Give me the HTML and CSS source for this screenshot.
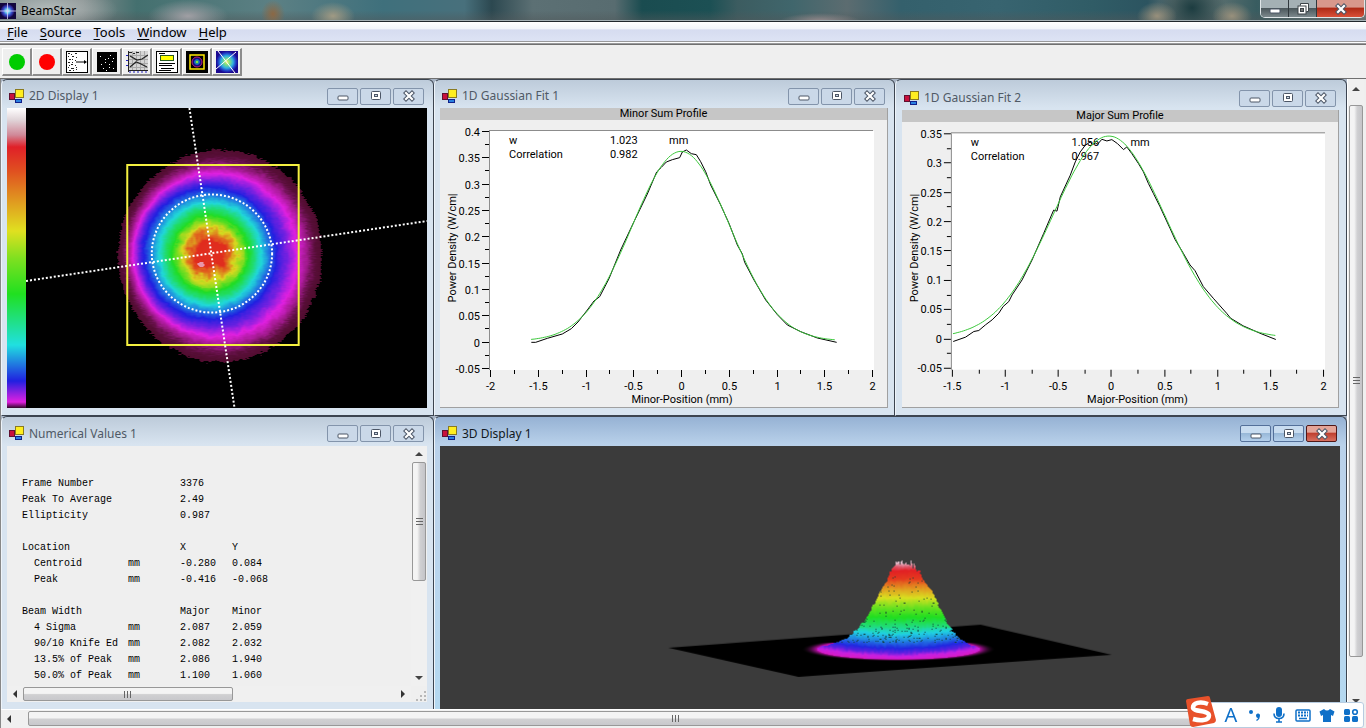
FILE: index.html
```html
<!DOCTYPE html>
<html lang="en">
<head>
<meta charset="utf-8">
<title>BeamStar</title>
<link rel="stylesheet" href="styles.css">
</head>
<body>
<svg class="defs" aria-hidden="true">
  <symbol id="i-form" viewBox="0 0 15 15">
    <rect x=".5" y="4.500" width="5" height="6" fill="#c8103c" stroke="#601030"/>
    <rect x="6.500" y=".5" width="8" height="8" fill="#ffee20" stroke="#8a7a20"/>
    <rect x="6.500" y="10.500" width="6" height="3" fill="#2a80e0" stroke="#10208a"/>
  </symbol>
  <symbol id="i-min" viewBox="0 0 14 12"><rect x="2" y="6" width="10" height="4" rx="1" fill="#fff" stroke="#4c5666"/></symbol>
  <symbol id="i-max" viewBox="0 0 14 12"><rect x="2.500" y="1.500" width="9" height="8" rx="1" fill="#fff" stroke="#4c5666"/><rect x="5.500" y="4.500" width="3" height="2" fill="#cdd8e6" stroke="#4c5666"/></symbol>
  <symbol id="i-close" viewBox="0 0 14 12"><path d="M4 3l6 6M10 3l-6 6" stroke="#4c5666" stroke-width="4.200" stroke-linecap="square"/><path d="M4 3l6 6M10 3l-6 6" stroke="#fff" stroke-width="2.200" stroke-linecap="square"/></symbol>
  <symbol id="i-restore" viewBox="0 0 14 14"><path d="M4.500 3.500v-2h8v8h-2" fill="#fff" stroke="#3c4448"/><rect x="2" y="4" width="8" height="8" fill="#fff" stroke="#3c4448"/><rect x="4.500" y="6.500" width="3" height="3" fill="#777" stroke="#3c4448"/></symbol>
  <symbol id="i-up" viewBox="0 0 8 8"><path d="M0 6l4-4 4 4z" fill="#444"/></symbol>
  <symbol id="i-down" viewBox="0 0 8 8"><path d="M0 2l4 4 4-4z" fill="#444"/></symbol>
  <symbol id="i-left" viewBox="0 0 8 8"><path d="M6 0L2 4l4 4z" fill="#333"/></symbol>
  <symbol id="i-right" viewBox="0 0 8 8"><path d="M2 0l4 4-4 4z" fill="#333"/></symbol>
</svg>

<header class="titlebar">
  <svg class="titlebar__icon" viewBox="0 0 16 16" aria-hidden="true">
    <defs><radialGradient id="beam"><stop offset="0" stop-color="#e8f8ff"/><stop offset=".3" stop-color="#6ad0e8"/><stop offset=".6" stop-color="#3a50d0"/><stop offset="1" stop-color="#1a0858"/></radialGradient></defs>
    <rect width="16" height="16" fill="#12063c"/><circle cx="7.500" cy="8" r="7" fill="url(#beam)"/><path d="M7.500 0v16M0 8h16" stroke="#d8d0f8" stroke-width=".8"/>
  </svg>
  <h1 class="titlebar__name">BeamStar</h1>
  <div class="caption">
    <button class="caption__btn" aria-label="Minimize"><svg viewBox="0 0 14 12"><use href="#i-min"/></svg></button>
    <button class="caption__btn" aria-label="Restore"><svg viewBox="0 0 14 14"><use href="#i-restore"/></svg></button>
    <button class="caption__btn caption__btn--close" aria-label="Close"><svg viewBox="0 0 14 12"><use href="#i-close"/></svg></button>
  </div>
</header>

<nav class="menu" aria-label="Main menu">
  <button class="menu__item"><u>F</u>ile</button>
  <button class="menu__item"><u>S</u>ource</button>
  <button class="menu__item"><u>T</u>ools</button>
  <button class="menu__item"><u>W</u>indow</button>
  <button class="menu__item"><u>H</u>elp</button>
</nav>

<div class="toolbar" role="toolbar" aria-label="Tools">
  <button class="tool" aria-label="Start"><svg viewBox="0 0 22 22"><circle cx="11" cy="11" r="8" fill="#0c0"/></svg></button>
  <button class="tool" aria-label="Stop"><svg viewBox="0 0 22 22"><circle cx="11" cy="11" r="8" fill="#f00"/></svg></button>
  <button class="tool" aria-label="Average"><svg viewBox="0 0 22 22"><rect x=".5" y=".5" width="21" height="21" fill="#fff" stroke="#000"/><path d="M10 11h9" stroke="#000"/><path d="M18 9l3 2-3 2z"/><path d="M2 2.500h2m1 1h1m3-1h2M2 5.500h1m3 0h2m2 1h1M3 8.500h2m1 0h1m2 1h1M2 11.500h2m2 0h1M3 14.500h1m1-1h2m2 1h1M2 16.500h1m2 1h3m2-1h1M3 19.500h2m2 0h1m2-1h1" stroke="#222"/></svg></button>
  <button class="tool" aria-label="Background"><svg viewBox="0 0 22 22"><rect x="1" y="1" width="20" height="20"/><path d="M4 5.500h1m4 3h1m4-4h1m2 3h1M5 13.500h1m3-2h1m3 2h1m2-3h1M7 17.500h1m5-1h1m3 1h1M12 7.500h1m-3 12h1" stroke="#fff"/></svg></button>
  <button class="tool" aria-label="Profiles"><svg viewBox="0 0 22 22"><rect x="2" y="0" width="20" height="19" fill="#d4d4d4"/><path d="M6.500 0v19M10.500 0v19M14.500 0v19M18.500 0v19M2 4.500h20M2 8.500h20M2 12.500h20M2 16.500h20" stroke="#a8a8a8"/><path d="M4 5l7 4 5-1 6-4M4 16l6-5 3 1 8 4" fill="none" stroke="#222" stroke-width="1.200"/><path d="M3 1.500h3m1 1h2m1-1h3M2 19.500h20M2.500 0v21" stroke="#222"/><path d="M4 20v2M8 20v2M12 20v2M16 20v2M20 20v2M0 4.500h2m-2 5h2m-2 5h2" stroke="#2020c0"/></svg></button>
  <button class="tool" aria-label="Numerical values"><svg viewBox="0 0 22 22"><rect x=".5" y=".5" width="21" height="21" fill="#fff" stroke="#000"/><path d="M3 2.500h6M3 12.500h16M3 14.500h13M5 17.500h13M3 19.500h12" stroke="#000"/><rect x="4.500" y="4.500" width="13" height="5" fill="#ff0" stroke="#285a20"/></svg></button>
  <button class="tool" aria-label="2D display"><svg viewBox="0 0 22 22"><rect width="22" height="22"/><rect x="4" y="4" width="14" height="14" fill="none" stroke="#ffe800" stroke-width="1.500"/><circle cx="11" cy="11" r="5" fill="#101070" stroke="#c01880"/><circle cx="11" cy="11" r="2.500" fill="#18a080" stroke="#2050e0"/><circle cx="11" cy="11" r="1" fill="#a0f040"/></svg></button>
  <button class="tool" aria-label="Beam axes"><svg viewBox="0 0 22 22"><defs><radialGradient id="axes"><stop offset="0" stop-color="#f8f060"/><stop offset=".25" stop-color="#80e080"/><stop offset=".55" stop-color="#30b0e0"/><stop offset=".8" stop-color="#2040c8"/><stop offset="1" stop-color="#1a0890"/></radialGradient></defs><rect width="22" height="22" fill="#1a0890"/><circle cx="11" cy="11" r="11" fill="url(#axes)"/><path d="M2 0l17 22M20 1L0 18" stroke="#fff"/></svg></button>
</div>

<main class="mdi">
  <div class="mdi__windows">
    <section class="window window--map">
      <div class="window__title"><svg class="window__icon" aria-hidden="true"><use href="#i-form"/></svg><h2>2D Display 1</h2><div class="window__buttons"></div></div>
      <div class="window__body map">
        <div class="map__scale"></div>
        <div class="map__view">
          <canvas id="beam2d" class="map__canvas" width="400" height="300"></canvas>
          <svg class="map__overlay" viewBox="0 0 400 300" preserveAspectRatio="none">
            <rect x="101" y="57" width="171" height="180" fill="none" stroke="#f4f040" stroke-width="2"/>
            <g fill="none" stroke="#fff" stroke-width="2" stroke-dasharray="2 2"><path d="M163 0L208 300M0 173L400 113"/><ellipse cx="185.500" cy="145.500" rx="60" ry="59"/></g>
          </svg>
        </div>
      </div>
    </section>

    <section class="window">
      <div class="window__title"><svg class="window__icon" aria-hidden="true"><use href="#i-form"/></svg><h2>1D Gaussian Fit 1</h2><div class="window__buttons"></div></div>
      <div class="window__body plot">
        <h3 class="plot__title">Minor Sum Profile</h3>
        <svg class="plot__chart" id="fit1" viewBox="0 0 447 287">
          <rect x="50" y="11" width="384" height="239" fill="#fff"/>
          <path d="M49.500 250V11M49 10.500h384" stroke="#8c8c8c" fill="none"/>
          <g class="ticks"></g>
          <text x="242" y="283" text-anchor="middle">Minor-Position (mm)</text>
          <text transform="translate(16 128) rotate(-90)" text-anchor="middle">Power Density (W/cm|</text>
          <text x="69" y="24">w</text><text x="170" y="24">1.023</text><text x="229" y="24">mm</text>
          <text x="69" y="38">Correlation</text><text x="170" y="38">0.982</text>
          <polyline class="trace" transform="translate(-6 -40) scale(.33333)" points="292,787 305,787 340,775 385,762 412,746 432,726 460,690 480,663 497,650 525,596 560,510 600,425 640,342 668,276 682,262 697,246 715,239 737,233 745,216 757,210 772,221 787,224 800,245 815,275 830,315 860,375 885,430 910,495 925,522 932,547 960,600 995,660 1030,704 1060,735 1100,755 1150,774 1208,787"/>
          <path class="fit"/>
        </svg>
      </div>
    </section>

    <section class="window window--fit2">
      <div class="window__title"><svg class="window__icon" aria-hidden="true"><use href="#i-form"/></svg><h2>1D Gaussian Fit 2</h2><div class="window__buttons"></div></div>
      <div class="window__body plot">
        <h3 class="plot__title">Major Sum Profile</h3>
        <svg class="plot__chart" id="fit2" viewBox="0 0 437 285">
          <rect x="50" y="11" width="374" height="237" fill="#fff"/>
          <path d="M49.500 248V11M49 10.500h375" stroke="#8c8c8c" fill="none"/>
          <g class="ticks"></g>
          <text x="236" y="281" text-anchor="middle">Major-Position (mm)</text>
          <text transform="translate(16 126) rotate(-90)" text-anchor="middle">Power Density (W/cm|</text>
          <text x="69" y="24">w</text><text x="170" y="24">1.056</text><text x="229" y="24">mm</text>
          <text x="69" y="38">Correlation</text><text x="170" y="38">0.967</text>
          <polyline class="trace" transform="translate(-8 -42) scale(.33333)" points="178,785 215,772 240,755 255,752 275,735 295,720 315,700 328,680 345,665 355,645 385,600 415,540 450,460 480,390 490,393 500,350 530,285 545,245 560,215 575,195 590,185 597,193 605,188 612,192 625,177 640,182 655,178 672,190 690,208 700,200 715,220 735,250 750,275 765,310 780,340 800,380 830,445 845,478 870,520 890,555 905,572 930,620 960,655 1000,700 1012,715 1050,738 1100,760 1148,779"/>
          <path class="fit"/>
        </svg>
      </div>
    </section>

    <section class="window window--values">
      <div class="window__title"><svg class="window__icon" aria-hidden="true"><use href="#i-form"/></svg><h2>Numerical Values 1</h2><div class="window__buttons"></div></div>
      <div class="window__body values">
        <div class="values__view">
          <table class="values__table">
            <tbody>
              <tr><td>Frame Number</td><td></td><td>3376</td><td></td></tr>
              <tr><td>Peak To Average</td><td></td><td>2.49</td><td></td></tr>
              <tr><td>Ellipticity</td><td></td><td>0.987</td><td></td></tr>
            </tbody>
            <tbody>
              <tr><th>Location</th><th></th><th>X</th><th>Y</th></tr>
              <tr class="sub"><td>Centroid</td><td>mm</td><td>-0.280</td><td>0.084</td></tr>
              <tr class="sub"><td>Peak</td><td>mm</td><td>-0.416</td><td>-0.068</td></tr>
            </tbody>
            <tbody>
              <tr><th>Beam Width</th><th></th><th>Major</th><th>Minor</th></tr>
              <tr class="sub"><td>4 Sigma</td><td>mm</td><td>2.087</td><td>2.059</td></tr>
              <tr class="sub"><td>90/10 Knife Ed</td><td>mm</td><td>2.082</td><td>2.032</td></tr>
              <tr class="sub"><td>13.5% of Peak</td><td>mm</td><td>2.086</td><td>1.940</td></tr>
              <tr class="sub"><td>50.0% of Peak</td><td>mm</td><td>1.100</td><td>1.060</td></tr>
            </tbody>
          </table>
        </div>
        <div class="scroll scroll--v">
          <button class="scroll__arrow" aria-label="Scroll up"><svg><use href="#i-up"/></svg></button>
          <div class="scroll__track"><div class="scroll__thumb" style="flex-grow:117"><i></i></div><div style="flex-grow:89"></div></div>
          <button class="scroll__arrow" aria-label="Scroll down"><svg><use href="#i-down"/></svg></button>
        </div>
        <div class="scroll scroll--h">
          <button class="scroll__arrow" aria-label="Scroll left"><svg><use href="#i-left"/></svg></button>
          <div class="scroll__track"><div class="scroll__thumb" style="flex-grow:209"><i></i></div><div style="flex-grow:162"></div></div>
          <button class="scroll__arrow" aria-label="Scroll right"><svg><use href="#i-right"/></svg></button>
        </div>
        <svg class="values__grip" viewBox="0 0 12 12" aria-hidden="true"><path d="M9 2h2M5 6h2m2 0h2M1 10h2m2 0h2m2 0h2" stroke="#b8b8b8" stroke-width="2"/></svg>
      </div>
    </section>

    <section class="window window--active">
      <div class="window__title"><svg class="window__icon" aria-hidden="true"><use href="#i-form"/></svg><h2>3D Display 1</h2><div class="window__buttons"></div></div>
      <div class="window__body surface"><canvas id="beam3d" class="surface__canvas" width="899" height="262"></canvas></div>
    </section>
  </div>

  <div class="scroll scroll--v">
    <button class="scroll__arrow" aria-label="Scroll up"><svg><use href="#i-up"/></svg></button>
    <div class="scroll__track"><div style="flex-grow:8"></div><div class="scroll__thumb" style="flex-grow:551"><i></i></div><div style="flex-grow:36"></div></div>
    <button class="scroll__arrow" aria-label="Scroll down"><svg><use href="#i-down"/></svg></button>
  </div>
  <div class="scroll scroll--h">
    <button class="scroll__arrow" aria-label="Scroll left"><svg><use href="#i-left"/></svg></button>
    <div class="scroll__track"><div style="flex-grow:11"></div><div class="scroll__thumb" style="flex-grow:1294"><i></i></div><div style="flex-grow:7"></div></div>
    <button class="scroll__arrow" aria-label="Scroll right"><svg><use href="#i-right"/></svg></button>
  </div>
</main>

<aside class="ime" aria-label="Input method">
  <svg class="ime__logo" viewBox="0 0 32 32" aria-hidden="true"><path d="M1 5Q1 3 3 3L23 0Q25 0 25 2L31 24Q31 26 29 27L8 31Q6 31 5 29Z" fill="#e8512a"/><path d="M23 8C15 5 8 7 8 11.500S24 14 24 19.500 15 25 8 23" fill="none" stroke="#fff" stroke-width="4.500"/></svg>
  <button class="ime__mode">A</button>
  <button aria-label="Punctuation"><svg viewBox="0 0 16 16"><circle cx="4" cy="5" r="2"/><path d="M9 8a2 2 0 1 1 4 1q0 3-3 5l-1-1q2-1 2-2-2 0-2-3z"/></svg></button>
  <button aria-label="Voice"><svg viewBox="0 0 16 16"><rect x="5" y="0" width="6" height="10" rx="3"/><path d="M3 6.500q0 5 5 5t5-5M8 11v4M5 15h6" fill="none" stroke="#0f70c8" stroke-width="1.600"/></svg></button>
  <button aria-label="Keyboard"><svg viewBox="0 0 16 16"><rect x="1" y="3" width="14" height="11" rx="1" fill="#fff" stroke="#0f70c8" stroke-width="1.500"/><path d="M3 5.500h10M3 8.500h10" stroke="#0f70c8" stroke-width="1.800" stroke-dasharray="2 1"/><path d="M4 11.500h8" stroke="#0f70c8" stroke-width="1.500"/></svg></button>
  <button aria-label="Skin"><svg viewBox="0 0 16 16"><path d="M5 2q3 3 6 0l4.500 2.500L14 9l-2-1v7H4V8L2 9 .5 4.500z"/></svg></button>
  <button aria-label="Toolbox"><svg viewBox="0 0 16 16"><rect x="1" y="2" width="6" height="6" rx="1.500"/><circle cx="12" cy="5" r="2.300" fill="none" stroke="#0f70c8" stroke-width="1.600"/><rect x="1" y="9" width="6" height="6" rx="1.500"/><rect x="9" y="9" width="6" height="6" rx="1.500"/></svg></button>
</aside>
<script src="app.js"></script>
</body>
</html>
```

FILE: styles.css
```css
* { box-sizing: border-box; }
body {
  margin: 0;
  height: 100vh;
  display: flex;
  flex-direction: column;
  overflow: hidden;
  background: #efefef;
  color: #000;
  font: 12px/16px "Noto Sans", "Open Sans", sans-serif;
}
h1, h2, h3 { margin: 0; font-size: inherit; font-weight: 400; }
button { padding: 0; border: 0; background: none; font: inherit; color: inherit; display: flex; align-items: center; justify-content: center; }
.defs { display: none; }

/* application title bar */
.titlebar {
  flex: none;
  height: 22px;
  display: flex;
  align-items: center;
  gap: 5px;
  border-bottom: 1px solid #20282c;
  box-shadow: inset 0 -1px #a4b0b4;
  background:
    radial-gradient(ellipse 70px 24px at 48px 10px, #b4bcbc, transparent),
    radial-gradient(ellipse 40px 16px at 188px 16px, #a09fa4, transparent),
    radial-gradient(ellipse 12px 14px at 273px 14px, #8c6844, transparent),
    radial-gradient(ellipse 22px 14px at 333px 16px, #a09a84, transparent),
    radial-gradient(ellipse 40px 8px at 820px 21px, #948a8c, transparent),
    radial-gradient(ellipse 20px 14px at 1157px 16px, #98907c, transparent),
    radial-gradient(ellipse 20px 14px at 1232px 16px, #98907c, transparent),
    radial-gradient(ellipse 34px 30px at 1192px 8px, #1c3c40, transparent),
    linear-gradient(transparent 50%, #50585a88),
    linear-gradient(90deg, #7c8c8c 0, #848c8c 6%, #44706f 10%, #5c8084 20%, #3f707c 28%, #48707c 34%, #2c4850 36%, #5c7074 39%, #586c70 45%, #1a4c50 47%, #1c5054 52%, #3c5c60 54%, #40666c 58%, #5c6c70 62%, #34606c 66%, #386470 73%, #305c66 80%, #2c5460 84%, #647474 86%, #5c7070 89%, #385c60 92%, #7c8484 100%);
}
.titlebar__icon { width: 16px; height: 16px; }
.titlebar__name { flex: 1; }
.caption { display: flex; align-self: flex-start; height: 18px; margin-right: 1px; border: 1px solid #e0e6e8; border-top: 0; border-radius: 0 0 5px 5px; overflow: hidden; }
.caption__btn { width: 28px; border-right: 1px solid #30383c; background: linear-gradient(#a4b0b4 0 45%, #4c585c 50%, #7c888c); }
.caption__btn svg { width: 14px; height: 14px; }
.caption__btn--close { width: 47px; border-right: 0; background: linear-gradient(#d8988c 0 40%, #b02c18 50%, #d85038); }

/* menu */
.menu { flex: none; height: 22px; padding: 0 1px; display: flex; border-bottom: 3px double #9a9a9c; background: linear-gradient(#fff 0, #f2f5fa 35%, #d6dcf0 42%, #dde3f4); }
.menu__item { display: block; padding: 0 6px; font-size: 13px; line-height: 18px; }
.menu__item u { text-underline-offset: 2px; }

/* toolbar */
.toolbar { flex: none; height: 35px; display: flex; padding: 3px 2px 0; border-top: 1px solid #707070; border-bottom: 1px solid #707070; }
.tool { width: 30px; height: 28px; border-right: 2px solid #8c8c8c; border-bottom: 2px solid #8c8c8c; border-left: 1px solid #fff; border-top: 1px solid #fff; }
.tool svg { width: 22px; height: 22px; }

/* workspace */
.mdi { flex: 1; min-height: 0; display: grid; grid-template: minmax(0, 1fr) 19px / minmax(0, 1fr) 17px; padding: 0 2px 0 0; border-left: 1px solid #888; }
.mdi__windows { display: grid; min-height: 0; grid-template-rows: minmax(0, 337fr) minmax(0, 293fr); grid-template-columns: minmax(0, 433fr) minmax(0, 461fr) minmax(0, 452fr); background: #a8b4c4; }
.window {
  min-width: 0;
  min-height: 0;
  display: flex;
  flex-direction: column;
  padding: 0 6px 7px 5px;
  border: 1px solid #3c4450;
  border-left-color: #eef4fa;
  border-radius: 6px 6px 0 0;
  background: linear-gradient(#bdcbda, #d8e4f0 28px);
}
.window--fit2 { padding: 2px 7px 7px 6px; }
.window--values { border-bottom: 0; }
.window--active { grid-column: span 2; padding-bottom: 0; border-bottom: 0; background: linear-gradient(#96b2d4, #b9d1ea 28px, #bcd4ec 100px, #b4d8f0); }
.window__title { flex: none; height: 28px; display: flex; align-items: center; gap: 5px; padding: 4px 3px 0 2px; color: #505a66; }
.window__title h2 { flex: 1; white-space: nowrap; }
.window--active .window__title { color: #101820; }
.window--active .window__title, .window--values .window__title { height: 29px; }
.window__icon { width: 15px; height: 15px; }
.window__buttons { display: flex; gap: 2px; }
.window__btn { width: 31px; height: 17px; border: 1px solid #8394ab; border-radius: 2px; background: #cad8e8; }
.window__btn svg { width: 14px; height: 12px; }
.window--active .window__btn { border-color: #54709a; background: linear-gradient(#c8dcf0 45%, #98b8d8 50%, #b4d0ec); }
.window--active .window__btn:last-child { border-color: #501818; background: linear-gradient(#e4a498 40%, #c04030 50%, #d87060); }
.window__body { flex: 1; min-height: 0; }

.map { display: flex; background: #000; }
.map__scale { width: 19px; background: linear-gradient(#fff 0, #e0d4d8 4%, #d08898 9%, #e02028 13%, #e05020 21%, #e0a020 32%, #e0e020 41%, #80e020 50%, #20e020 62%, #20e090 72%, #20e0e0 79%, #2080e0 85%, #2020e0 91%, #9020e0 95%, #e020e0 98%, #300828 100%); }
.map__view { flex: 1; min-width: 0; position: relative; }
.map__canvas { display: block; width: 100%; height: 100%; }
.map__overlay { position: absolute; inset: 0; width: 100%; height: 100%; }

.plot { display: flex; flex-direction: column; background: #efefef; border-right: 1px solid #a0a0a0; border-bottom: 1px solid #a0a0a0; font: 11px/12px Roboto, "Liberation Sans", sans-serif; }
.plot__title { flex: none; height: 12px; background: #c6c6c6; text-align: center; }
.plot__chart { flex: 1; min-height: 0; width: 100%; }
.trace { fill: none; stroke: #000; stroke-width: 1px; vector-effect: non-scaling-stroke; }
.fit { fill: none; stroke: #3cc83c; stroke-width: 1px; }
.tick { fill: none; stroke: #000; }

.values { display: grid; grid-template: minmax(0, 1fr) 16px / minmax(0, 1fr) 16px; background: #efefef; }
.values__view { overflow: hidden; padding: 30px 0 0 15px; }
.values__table { table-layout: fixed; width: 270px; border-collapse: collapse; font: 10px/16px "Liberation Mono", monospace; text-align: left; white-space: pre; }
.values__table td, .values__table th { height: 16px; padding: 0; font-weight: 400; }
.values__table tr > :nth-child(1) { width: 106px; }
.values__table tr > :nth-child(2), .values__table tr > :nth-child(3) { width: 52px; }
.values__table .sub > :first-child { padding-left: 12px; }
.values__table tbody + tbody::before { content: ""; display: table-row; height: 16px; }
.values__grip { width: 12px; height: 12px; place-self: end; }

.surface { background: #3b3b3b; }
.surface__canvas { display: block; width: 100%; height: 100%; object-fit: contain; }

/* scroll bars */
.scroll { display: flex; min-width: 0; min-height: 0; background: #f0f0f0; }
.scroll--v { flex-direction: column; padding: 0 1px; }
.scroll--h { padding: 1px 0; }
.scroll__arrow { flex: none; width: 16px; height: 16px; align-self: center; }
.scroll__arrow svg { width: 8px; height: 8px; }
.scroll__track { flex: 1; min-width: 0; min-height: 0; display: flex; }
.scroll--v .scroll__track { flex-direction: column; }
.scroll__track > div { flex-basis: 0; }
.scroll__thumb { display: flex; align-items: center; justify-content: center; border: 1px solid #989898; border-radius: 2px; background: linear-gradient(#f4f4f4 45%, #d0d0d2 55%, #c8c8cc); }
.scroll--v .scroll__thumb { background: linear-gradient(90deg, #f4f4f4 35%, #d0d0d2 60%, #c4c4c8); }
.scroll__thumb i { width: 8px; height: 7px; background: repeating-linear-gradient(90deg, #666 0 1px, transparent 1px 3px); }
.scroll--v .scroll__thumb i { width: 7px; height: 8px; background: repeating-linear-gradient(#666 0 1px, transparent 1px 3px); }
.mdi > .scroll--v { padding-top: 2px; border-left: 1px solid #fff; }
.mdi > .scroll--h { padding: 1px 0 2px; border-top: 1px solid #fff; }

/* floating input-method bar */
.ime { position: absolute; right: 2px; bottom: 0; height: 26px; padding: 0 2px 0 28px; display: flex; align-items: center; gap: 4px; border: 1px solid #b8cce0; border-radius: 3px; background: #fff; }
.ime button { width: 20px; height: 24px; color: #0f70c8; }
.ime button svg { width: 16px; height: 16px; fill: #0f70c8; }
.ime .ime__mode { font: 20px/24px "Noto Sans", sans-serif; }
.ime__logo { position: absolute; left: -8px; bottom: -1px; width: 32px; height: 32px; }
```

FILE: app.js
```js
const SVG = 'http://www.w3.org/2000/svg';

for (const box of document.querySelectorAll('.window__buttons')) {
  box.innerHTML = [['min', 'Minimize'], ['max', 'Maximize'], ['close', 'Close']]
    .map(([id, label]) => `<button class="window__btn" aria-label="${label}"><svg><use href="#i-${id}"/></svg></button>`).join('');
}

/* Gaussian charts: axes and fitted curve */
function chart(id, c) {
  const svg = document.getElementById(id);
  const ticks = svg.querySelector('.ticks');
  const px = v => c.x0 + (v - c.xMin) * c.xUnit;
  const py = v => c.y0 - (v + 0.05) * c.yUnit;
  let d = '';
  const label = (x, y, anchor, v) => {
    const t = document.createElementNS(SVG, 'text');
    t.setAttribute('x', x); t.setAttribute('y', y);
    t.setAttribute('text-anchor', anchor);
    t.textContent = String(+v.toFixed(2));
    ticks.append(t);
  };
  for (let i = 0; i <= (2 - c.xMin) * 4; i++) {
    const v = c.xMin + i / 4, x = Math.round(px(v)) + .5, major = i % 2 === 0;
    d += `M${x} ${c.bottom}v${major ? 7 : 4}`;
    if (major) label(x, c.bottom + 20, 'middle', v);
  }
  for (let i = 0; i <= Math.round((c.yMax + 0.05) / 0.025); i++) {
    const v = -0.05 + i * 0.025, y = Math.round(py(v)) + .5, major = i % 2 === 0;
    d += `M49 ${y}h${major ? -7 : -4}`;
    if (major) label(40, y + 4, 'end', v);
  }
  const p = document.createElementNS(SVG, 'path');
  p.setAttribute('class', 'tick'); p.setAttribute('d', d); ticks.append(p);
  let f = '';
  for (let x = c.from; x <= c.to; x += 0.02)
    f += (f ? 'L' : 'M') + px(x).toFixed(1) + ' ' + py(c.peak * Math.exp(-2 * (x - c.mean) ** 2 / c.w ** 2) + .001).toFixed(1);
  svg.querySelector('.fit').setAttribute('d', f);
}
chart('fit1', { x0: 50, xMin: -2, xUnit: 95.5, y0: 248, yUnit: 527, yMax: 0.4, bottom: 250, peak: 0.36, mean: 0, w: 1.023, from: -1.57, to: 1.63 });
chart('fit2', { x0: 50, xMin: -1.5, xUnit: 106.3, y0: 246, yUnit: 588, yMax: 0.35, bottom: 248, peak: 0.344, mean: -0.02, w: 1.056, from: -1.49, to: 1.57 });

/* Seeded noise */
let seed = 7;
const rnd = () => (seed = (seed * 16807) % 2147483647) / 2147483647;
const grid = Array.from({ length: 65536 }, rnd);
const cell = (x, y) => grid[((y & 255) << 8) | (x & 255)];
function noise(x, y) {
  const i = Math.floor(x), j = Math.floor(y), u = x - i, v = y - j;
  return (cell(i, j) * (1 - u) + cell(i + 1, j) * u) * (1 - v) + (cell(i, j + 1) * (1 - u) + cell(i + 1, j + 1) * u) * v - .5;
}
const clamp = v => Math.max(0, Math.min(1, v));
function ramp(stops, r) {
  if (r <= stops[0][0]) return stops[0][1];
  for (let i = 1; i < stops.length; i++) if (r < stops[i][0]) {
    const [a, p] = stops[i - 1], [b, q] = stops[i], t = (r - a) / (b - a);
    return p.map((v, k) => v + (q[k] - v) * t);
  }
  return stops[stops.length - 1][1];
}

/* 2D intensity map */
(function () {
  const ctx = document.getElementById('beam2d').getContext('2d');
  const img = ctx.createImageData(400, 300);
  const stops = [[0, [224, 48, 32]], [14, [224, 44, 30]], [20, [224, 110, 30]], [27, [216, 216, 32]], [33, [120, 220, 32]], [38, [32, 220, 36]], [44, [32, 220, 110]], [51, [32, 216, 216]], [58, [32, 130, 224]], [66, [32, 32, 224]], [73, [110, 32, 224]], [81, [224, 32, 224]], [88, [160, 26, 140]], [94, [108, 18, 80]], [98, [88, 14, 56]], [104, [80, 12, 46]]];
  for (let y = 0; y < 300; y++) for (let x = 0; x < 400; x++) {
    const d1 = Math.hypot(x - 183, y - 145), d2 = Math.hypot((x - 194) * 1.03, (y - 147.5) * .98);
    const w = clamp((d1 - 68) / 28);
    let r = d1 * (1 - w) + d2 * w;
    r += noise(x / 7, y / 7) * (r < 35 ? 8 : 2) + noise(x / 2.5, y / 2.5) * (r < 30 ? 5 : 2) + noise(x / 3 + 90, y * 1.3) * (r > 90 ? 4 : 1);
    let c = r > 104 ? [0, 0, 0] : ramp(stops, r);
    if (Math.hypot((x - 174) / 1.4, y - 156) < 2.2 + noise(x, y)) c = [232, 150, 170];
    img.data.set([c[0], c[1], c[2], 255], (y * 400 + x) * 4);
  }
  ctx.putImageData(img, 0, 0);
})();

/* 3D surface */
(function () {
  const ctx = document.getElementById('beam3d').getContext('2d');
  ctx.fillStyle = '#000';
  ctx.beginPath();
  ctx.moveTo(228, 201); ctx.lineTo(540, 178); ctx.lineTo(671, 208); ctx.lineTo(358, 230);
  ctx.fill();
  const img = ctx.getImageData(0, 0, 899, 262);
  const left = [[114, [464]], [118, [453]], [122, [451]], [134, [446]], [144, [439]], [159, [432]], [174, [423]], [183, [415]], [191, [406]], [196, [392]], [203, [376]]];
  const right = [[114, [465]], [119, [474]], [123, [478]], [134, [483]], [144, [491]], [159, [498]], [174, [505]], [183, [511]], [191, [518]], [196, [526]], [203, [539]]];
  const colour = [[116, [224, 190, 204]], [120, [222, 90, 110]], [124, [226, 32, 36]], [132, [228, 60, 30]], [141, [226, 150, 32]], [151, [216, 224, 32]], [160, [110, 224, 32]], [170, [32, 222, 32]], [180, [32, 220, 130]], [187, [32, 210, 224]], [194, [32, 130, 224]], [201, [32, 40, 224]], [205, [90, 32, 224]], [209, [200, 32, 224]], [213, [216, 28, 200]]];
  for (let y = 112; y < 220; y++) for (let x = 340; x < 580; x++) {
    const jag = noise(y / 2, 9) * 2;
    const e = Math.hypot((x - 457.5) / 81, (y - 202) / 10);
    let c = null;
    const ySample = y + (y < 126 ? noise(x / 1.4, 40) * 9 : 0);
    const inside = y < 203 && x > ramp(left, ySample)[0] + jag && x < ramp(right, ySample)[0] + jag;
    if (inside && ySample > 114 || e < 1 && y >= 199) {
      const base = y > 180 ? (x - 457.5) ** 2 / 84 ** 2 * 9 : 0;
      c = ramp(colour, y + base + noise(x / 2, y / 3) * 2);
      if (y > 128 && y < 196 && cell(x, y) < (y > 178 ? .07 : .025)) c = [20, 60, 50];
    } else if (e < 1.2 && y > 195) {
      const k = Math.min(1, (1.2 - e) / .2);
      c = [190 * k * k, 16 * k, 170 * k * k];
    }
    if (c) img.data.set([c[0], c[1], c[2], 255], (y * 899 + x) * 4);
  }
  ctx.putImageData(img, 0, 0);
})();
```
